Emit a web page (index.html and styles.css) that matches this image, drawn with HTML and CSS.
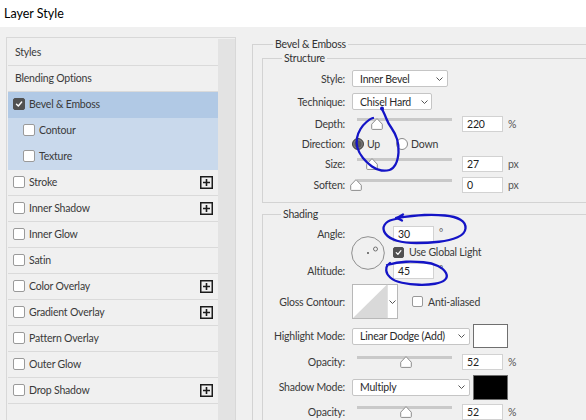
FILE: index.html
```html
<!DOCTYPE html>
<html>
<head>
<meta charset="utf-8">
<title>Layer Style</title>
<link rel="stylesheet" href="styles.css">
</head>
<body>
<div class="window">
  <div class="titlebar">Layer Style</div>
  <div class="main">
    <div class="sidebar">
      <div class="list">
        <div class="item plain">Styles</div>
        <div class="item plain">Blending Options</div>
        <div class="item sel"><span class="cb on"><svg viewBox="0 0 12 12"><polyline points="3,6.2 5.2,8.4 9.2,3.6"/></svg></span>Bevel &amp; Emboss</div>
        <div class="item sub"><span class="cb"></span>Contour</div>
        <div class="item sub"><span class="cb"></span>Texture</div>
        <div class="item"><span class="cb"></span>Stroke<svg class="plus" viewBox="0 0 13 13"><rect x="0.75" y="0.75" width="11.5" height="11.5"/><path d="M6.5 3v7M3 6.5h7"/></svg></div>
        <div class="item"><span class="cb"></span>Inner Shadow<svg class="plus" viewBox="0 0 13 13"><rect x="0.75" y="0.75" width="11.5" height="11.5"/><path d="M6.5 3v7M3 6.5h7"/></svg></div>
        <div class="item"><span class="cb"></span>Inner Glow</div>
        <div class="item"><span class="cb"></span>Satin</div>
        <div class="item"><span class="cb"></span>Color Overlay<svg class="plus" viewBox="0 0 13 13"><rect x="0.75" y="0.75" width="11.5" height="11.5"/><path d="M6.5 3v7M3 6.5h7"/></svg></div>
        <div class="item"><span class="cb"></span>Gradient Overlay<svg class="plus" viewBox="0 0 13 13"><rect x="0.75" y="0.75" width="11.5" height="11.5"/><path d="M6.5 3v7M3 6.5h7"/></svg></div>
        <div class="item"><span class="cb"></span>Pattern Overlay</div>
        <div class="item"><span class="cb"></span>Outer Glow</div>
        <div class="item"><span class="cb"></span>Drop Shadow<svg class="plus" viewBox="0 0 13 13"><rect x="0.75" y="0.75" width="11.5" height="11.5"/><path d="M6.5 3v7M3 6.5h7"/></svg></div>
      </div>
      <div class="scroll"></div>
    </div>

    <div class="content">
      <fieldset class="outer">
        <legend class="lg-outer">Bevel &amp; Emboss</legend>

        <fieldset class="inner structure">
          <legend class="lg-structure">Structure</legend>
          <div class="row h23">
            <span class="lbl">Style:</span>
            <div class="dd w-style"><span>Inner Bevel</span><svg class="chev" viewBox="0 0 7 4"><polyline points="0.5,0.5 3.5,3.5 6.5,0.5"/></svg></div>
          </div>
          <div class="row h23">
            <span class="lbl">Technique:</span>
            <div class="dd w-tech"><span>Chisel Hard</span><svg class="chev" viewBox="0 0 7 4"><polyline points="0.5,0.5 3.5,3.5 6.5,0.5"/></svg></div>
          </div>
          <div class="row h21">
            <span class="lbl">Depth:</span>
            <div class="ctl">
              <div class="slider"><div class="track"></div><svg class="thumb" style="left:19px" viewBox="0 0 12 12"><path d="M6 0.6 L11.3 6.2 V10.6 Q11.3 11.4 10.5 11.4 H1.5 Q0.7 11.4 0.7 10.6 V6.2 Z"/></svg></div>
              <div class="num">220</div><span class="unit">%</span>
            </div>
          </div>
          <div class="row h20">
            <span class="lbl">Direction:</span>
            <div class="ctl">
              <span class="radio on"></span><span class="rtxt">Up</span>
              <span class="radio down"></span><span class="rtxt">Down</span>
            </div>
          </div>
          <div class="row h20">
            <span class="lbl">Size:</span>
            <div class="ctl">
              <div class="slider"><div class="track"></div><svg class="thumb" style="left:14px" viewBox="0 0 12 12"><path d="M6 0.6 L11.3 6.2 V10.6 Q11.3 11.4 10.5 11.4 H1.5 Q0.7 11.4 0.7 10.6 V6.2 Z"/></svg></div>
              <div class="num">27</div><span class="unit">px</span>
            </div>
          </div>
          <div class="row h21">
            <span class="lbl">Soften:</span>
            <div class="ctl">
              <div class="slider"><div class="track"></div><svg class="thumb" style="left:-2px" viewBox="0 0 12 12"><path d="M6 0.6 L11.3 6.2 V10.6 Q11.3 11.4 10.5 11.4 H1.5 Q0.7 11.4 0.7 10.6 V6.2 Z"/></svg></div>
              <div class="num">0</div><span class="unit">px</span>
            </div>
          </div>
        </fieldset>

        <fieldset class="inner shading">
          <legend class="lg-shading">Shading</legend>
          <div class="angle-grid">
            <span class="lbl a-lbl">Angle:</span>
            <div class="dial"><svg viewBox="0 0 34 34"><circle class="ring" cx="17" cy="17" r="16.3"/><circle class="dot" cx="17" cy="17" r="0.9"/><circle class="light" cx="24.5" cy="13" r="2"/></svg></div>
            <div class="ctl a-in"><div class="num">30</div><span class="deg">°</span></div>
            <div class="ctl a-cb"><span class="cb on small"><svg viewBox="0 0 12 12"><polyline points="3,6.2 5.2,8.4 9.2,3.6"/></svg></span><span>Use Global Light</span></div>
            <span class="lbl alt-lbl">Altitude:</span>
            <div class="ctl alt-in"><div class="num">45</div><span class="deg">°</span></div>
          </div>
          <div class="row gloss">
            <span class="lbl">Gloss Contour:</span>
            <div class="ctl">
              <svg class="contour" viewBox="0 0 46 35"><rect class="cbox" x="0.5" y="0.5" width="45" height="34"/><path class="ctri" d="M1 34 L34.5 1 V34 Z"/><path class="csep" d="M35 0.5 V34.5"/><polyline class="cchev" points="37.5,16.5 40.5,19.5 43.5,16.5"/></svg>
              <span class="cb aa"></span><span>Anti-aliased</span>
            </div>
          </div>
          <div class="row h28">
            <span class="lbl">Highlight Mode:</span>
            <div class="ctl">
              <div class="dd w-mode"><span>Linear Dodge (Add)</span><svg class="chev" viewBox="0 0 7 4"><polyline points="0.5,0.5 3.5,3.5 6.5,0.5"/></svg></div>
              <div class="swatch white"></div>
            </div>
          </div>
          <div class="row h24">
            <span class="lbl">Opacity:</span>
            <div class="ctl">
              <div class="slider"><div class="track"></div><svg class="thumb" style="left:48px" viewBox="0 0 12 12"><path d="M6 0.6 L11.3 6.2 V10.6 Q11.3 11.4 10.5 11.4 H1.5 Q0.7 11.4 0.7 10.6 V6.2 Z"/></svg></div>
              <div class="num">52</div><span class="unit">%</span>
            </div>
          </div>
          <div class="row h26">
            <span class="lbl">Shadow Mode:</span>
            <div class="ctl">
              <div class="dd w-mode"><span>Multiply</span><svg class="chev" viewBox="0 0 7 4"><polyline points="0.5,0.5 3.5,3.5 6.5,0.5"/></svg></div>
              <div class="swatch black"></div>
            </div>
          </div>
          <div class="row h24">
            <span class="lbl">Opacity:</span>
            <div class="ctl">
              <div class="slider"><div class="track"></div><svg class="thumb" style="left:48px" viewBox="0 0 12 12"><path d="M6 0.6 L11.3 6.2 V10.6 Q11.3 11.4 10.5 11.4 H1.5 Q0.7 11.4 0.7 10.6 V6.2 Z"/></svg></div>
              <div class="num">52</div><span class="unit">%</span>
            </div>
          </div>
        </fieldset>
      </fieldset>
    </div>
  </div>

  <svg class="ink" viewBox="0 0 586 420">
    <circle class="inkdot" cx="382" cy="108.5" r="2"/>
    <path d="M382,109 Q385,115 386.5,119 Q388,123 391.5,128 Q395,133 397,139 Q399,145 398.5,152.5 Q398,160 395.5,164.5 Q393,169 389.5,170 Q386,171 381.5,170.5 Q377,170 372,166.5 Q367,163 363,158 Q359,153 357.5,148 Q356,143 357,138 Q358,133 360.5,129 Q363,125 366.5,122 Q370,119 371.5,118.5 L373,118"/>
    <path d="M403,214.5 L397,218 L402,220.5"/>
    <path d="M396,218 Q414,215.5 424.5,215 Q435,214.5 445,215.5 Q455,216.5 460.5,219.75 Q466,223 465.5,228.5 Q465,234 457.5,237.25 Q450,240.5 439,241.75 Q428,243 416.5,243 Q405,243 397,240.75 Q389,238.5 385.5,233.75 Q382,229 384.5,225 Q387,221 392.5,219.75 L400,218"/>
    <path d="M387,265 Q397,262 406,261.75 Q415,261.5 423.5,262.25 Q432,263 438,266 Q444,269 446,273 Q448,277 445,279.75 Q442,282.5 435,283.75 Q428,285 419,284.75 Q410,284.5 402,282.75 Q394,281 390.25,277.5 Q386.5,274 386.25,270.5 Q386,267 387.5,265.25 L390,263"/>
  </svg>
</div>
</body>
</html>
```

FILE: styles.css
```css
* { box-sizing: border-box; }
html, body { margin: 0; padding: 0; }
body {
  width: 586px;
  height: 420px;
  overflow: hidden;
  background: #f0f0f0;
  font-family: Lato, "Noto Sans", sans-serif;
  font-size: 10.5px;
  letter-spacing: -0.2px;
  color: #3a3a3a;
}
.window { position: relative; width: 586px; height: 420px; overflow: hidden; }

.titlebar {
  height: 27px;
  background: #fff;
  color: #000;
  font-size: 12.5px;
  letter-spacing: 0;
  padding-left: 4px;
  display: flex;
  align-items: center;
}

.main { display: flex; align-items: flex-start; }

/* left list */
.sidebar {
  margin: 10px 0 0 6px;
  width: 230px;
  height: 410px;
  border: 1px solid #d8d8d8;
  padding: 2px 0 0 1px;
  display: flex;
  flex-shrink: 0;
}
.list { width: 210px; }
.scroll { width: 17px; background: #e3e3e3; margin-top: -1px; }
.item {
  height: 26px;
  border-bottom: 1px solid #dadada;
  display: flex;
  align-items: center;
  padding-left: 5px;
  padding-bottom: 1px;
}
.item.plain { padding-left: 7px; }
.item.sel { background: #b1c9e5; border-bottom-color: #b1c9e5; }
.item.sub { background: #c9d9ec; border-bottom-color: #c9d9ec; padding-left: 15px; }

.cb {
  width: 12px;
  height: 12px;
  border: 1px solid #9a9a9a;
  border-radius: 2px;
  background: #fff;
  margin-right: 4px;
  flex-shrink: 0;
  display: inline-flex;
}
.cb.on { background: #515151; border-color: #515151; }
.cb svg { width: 100%; height: 100%; }
.cb polyline { fill: none; stroke: #fff; stroke-width: 1.7; stroke-linecap: round; stroke-linejoin: round; }
.cb.small { width: 11px; height: 11px; margin-right: 5px; }

.plus { width: 13px; height: 13px; margin-left: auto; margin-right: 5px; }
.plus rect { fill: none; stroke: #1c1c1c; stroke-width: 1.5; }
.plus path { stroke: #1c1c1c; stroke-width: 1.6; }

/* right side */
.content { margin: 10px 0 0 16px; flex-shrink: 0; }
fieldset {
  margin: 0;
  padding: 0;
  border: 1px solid #d3d3d3;
  min-width: 0;
}
legend {
  padding: 0 2px;
  line-height: 14px;
  height: 14px;
  color: #333;
}
.outer { width: 420px; border-bottom: none; }
.lg-outer { margin-left: 20px; }
.inner { margin-left: 9px; border-right: none; }
.lg-structure { margin-left: 19px; }
.lg-shading { margin-left: 18px; }
.structure { padding: 2px 0 7px 0; }
.shading { margin-top: 4px; border-bottom: none; height: 240px; }

.row {
  display: grid;
  grid-template-columns: 82px auto;
  column-gap: 7px;
  align-items: center;
  justify-items: start;
}
.lbl { justify-self: end; text-align: right; white-space: nowrap; }
.h20 { height: 20px; }
.h21 { height: 21px; }
.h23 { height: 23px; }
.h24 { height: 24px; }
.h26 { height: 26px; }
.h28 { height: 28px; }

.ctl { display: flex; align-items: center; }

.dd {
  height: 17px;
  border: 1px solid #c5c5c5;
  border-radius: 2px;
  background: #fff;
  display: flex;
  align-items: center;
  justify-content: space-between;
  padding: 0 4px 0 7px;
  color: #2a2a2a;
}
.w-style { width: 96px; }
.w-tech { width: 80px; padding-right: 3px; }
.w-mode { width: 118px; }
.chev { width: 7px; height: 4px; }
.chev polyline { fill: none; stroke: #555; stroke-width: 1; }

.slider { position: relative; width: 100px; height: 12px; }
.track { margin-left: 5px; height: 3px; background: #c9c9c9; }
.thumb { position: absolute; top: 0; width: 12px; height: 12px; }
.thumb path { fill: #fff; stroke: #8c8c8c; stroke-width: 1; }

.num {
  width: 41px;
  height: 16px;
  background: #fff;
  border: 1px solid #d2d2d2;
  padding-left: 4px;
  margin-left: 10px;
  display: flex;
  align-items: center;
  color: #222;
}
.unit { margin-left: 5px; color: #555; }
.deg { margin-left: 5px; color: #555; font-size: 10px; align-self: flex-start; margin-top: 0; }

.radio {
  width: 12px;
  height: 12px;
  border-radius: 50%;
  border: 1px solid #8a8a8a;
  background: #fff;
  flex-shrink: 0;
}
.radio.on { background: #5a5a5a; border-color: #444; box-shadow: inset 0 0 0 1.5px #777; }
.radio.down { margin-left: 16px; }
.rtxt { margin-left: 3px; }

/* angle block */
.angle-grid {
  display: grid;
  grid-template-columns: 89px 41px auto;
  grid-template-rows: 25px 12px 26px;
  align-items: center;
  justify-items: start;
}
.angle-grid .lbl { justify-self: end; padding-right: 7px; }
.a-lbl { grid-column: 1; grid-row: 1; }
.alt-lbl { grid-column: 1; grid-row: 3; }
.dial { grid-column: 2; grid-row: 1 / 4; width: 34px; height: 34px; margin-left: -1px; }
.dial svg { width: 34px; height: 34px; display: block; }
.dial .ring { fill: none; stroke: #8e8e8e; stroke-width: 1; }
.dial .dot { fill: #444; }
.dial .light { fill: none; stroke: #666; stroke-width: 0.9; }
.a-in { grid-column: 3; grid-row: 1; }
.a-cb { grid-column: 3; grid-row: 2; }
.alt-in { grid-column: 3; grid-row: 3; }
.angle-grid .num { margin-left: 0; }

.gloss { height: 35px; margin-bottom: 3px; }
.contour { width: 46px; height: 35px; }
.contour .cbox { fill: #fff; stroke: #b8b8b8; stroke-width: 1; }
.contour .ctri { fill: #d9d9d9; }
.contour .csep { stroke: #c6c6c6; stroke-width: 1; }
.contour .cchev { fill: none; stroke: #555; stroke-width: 1; }
.cb.aa { width: 11px; height: 11px; margin-left: 14px; margin-right: 5px; border-color: #999; }

.swatch { width: 35px; height: 24px; margin-left: 3px; border: 1px solid #6f6f6f; }
.swatch.white { background: #fff; }
.swatch.black { background: #000; height: 25px; }

/* pen annotations drawn over the screenshot */
.ink { position: absolute; left: 0; top: 0; width: 586px; height: 420px; pointer-events: none; }
.ink path { fill: none; stroke: #1414c6; stroke-width: 2.3; stroke-linecap: round; stroke-linejoin: round; }
.ink .inkdot { fill: #1414c6; }
```
